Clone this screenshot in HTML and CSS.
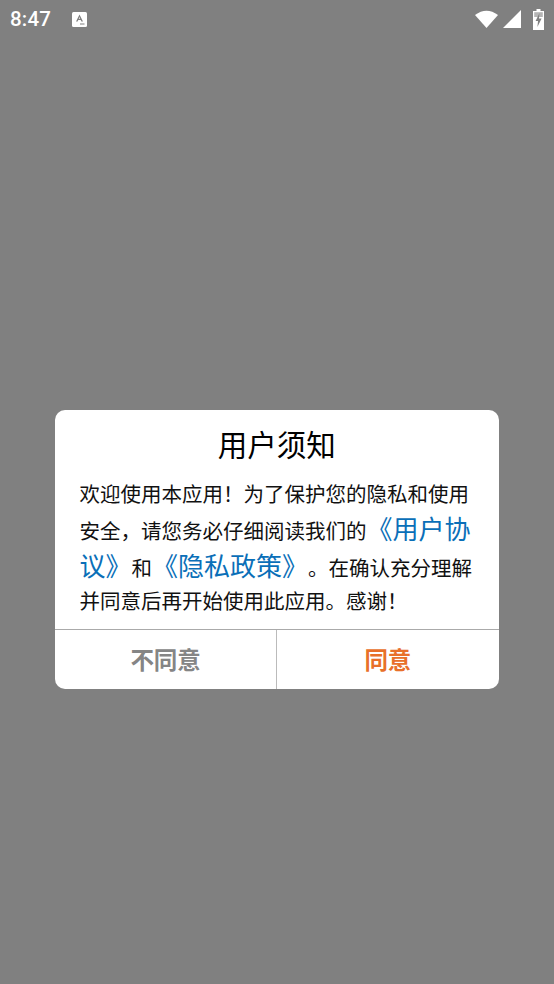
FILE: index.html
```html
<!DOCTYPE html>
<html lang="zh-CN">
<head>
    <meta charset="UTF-8">
    <meta name="viewport" content="width=device-width, initial-scale=1.0">
    <title>用户须知</title>
    <link rel="stylesheet" href="styles.css">
</head>
<body>
    <div class="status-bar">
        <span class="time">8:47</span>
        <svg class="notice-icon" width="15" height="15" viewBox="0 0 15 15">
            <rect x="0" y="0" width="15" height="15" rx="1.5" fill="#fff"/>
            <path d="M7.5 2.5 L11 9.5 H9.4 L8.7 8 H6.3 L5.6 9.5 H4 Z M7.5 5 L6.8 6.8 H8.2 Z" fill="#808080" fill-rule="evenodd"/>
            <rect x="8" y="11.5" width="4.5" height="1" fill="#808080"/>
        </svg>
        <div class="status-icons">
            <svg class="wifi-icon" width="23" height="18" viewBox="0 0 23 18">
                <path d="M0 5 Q11.5 -3.5 23 5 L11.5 18 Z" fill="#fff"/>
            </svg>
            <svg class="signal-icon" width="18" height="18" viewBox="0 0 18 18">
                <path d="M0 18 L18 0 V18 Z" fill="#fff"/>
            </svg>
            <svg width="11" height="21" viewBox="0 0 11 21">
                <path d="M3.5 0 H7.5 V2 H11 V21 H0 V2 H3.5 Z" fill="#fff"/>
                <path d="M1.2 3.2 H9.8 V8 H1.2 Z" fill="#b5b5b5"/>
                <path d="M6.5 4 L2.6 12 H5 L4.4 18 L8.6 9.5 H6 Z" fill="#808080"/>
            </svg>
        </div>
    </div>

    <div class="dialog">
        <div class="dialog-title">用户须知</div>
        <div class="dialog-message">欢迎使用本应用！为了保护您的隐私和使用安全，请您务必仔细阅读我们的<a class="link">《用户协议》</a>和<a class="link">《隐私政策》</a>。在确认充分理解并同意后再开始使用此应用。感谢！</div>
        <div class="dialog-actions">
            <div class="btn btn-cancel">不同意</div>
            <div class="btn btn-ok">同意</div>
        </div>
    </div>
</body>
</html>
```

FILE: styles.css
```css
body {
    margin: 0;
    min-height: 984px;
    background-color: #808080;
    font-family: "Noto Sans CJK SC", "Noto Sans", sans-serif;
}
.status-bar {
    display: flex;
    align-items: center;
    height: 38px;
    padding: 0 10px;
    color: #fff;
}
.time {
    font-family: Roboto, sans-serif;
    font-size: 20.5px;
    font-weight: 500;
    letter-spacing: 0.2px;
}
.notice-icon {
    margin-left: 21px;
}
.status-icons {
    display: flex;
    align-items: center;
    margin-left: auto;
}
.wifi-icon {
    margin-right: 5px;
}
.signal-icon {
    margin-right: 12px;
}
.dialog {
    width: 443.5px;
    margin: 372px 0 0 55px;
    background-color: white;
    border-radius: 10px;
    overflow: hidden;
}
.dialog-title {
    padding-top: 12px;
    font-size: 29.5px;
    line-height: 43px;
    text-align: center;
    color: #000;
}
.dialog-message {
    padding: 12px 25px 12px 24.5px;
    font-size: 20.5px;
    line-height: 33px;
    color: #111;
    text-spacing-trim: space-all;
}
.link {
    font-size: 26px;
    line-height: 36px;
    color: #0a6fb8;
}
.dialog-actions {
    display: flex;
    height: 59px;
    border-top: 1px solid #aaa;
}
.btn {
    flex: 1;
    display: flex;
    align-items: center;
    justify-content: center;
    padding-bottom: 1px;
    font-size: 23.5px;
    font-weight: 700;
}
.btn-cancel {
    color: #858585;
    border-right: 1px solid #bbb;
}
.btn-ok {
    color: #e8702a;
}
```
